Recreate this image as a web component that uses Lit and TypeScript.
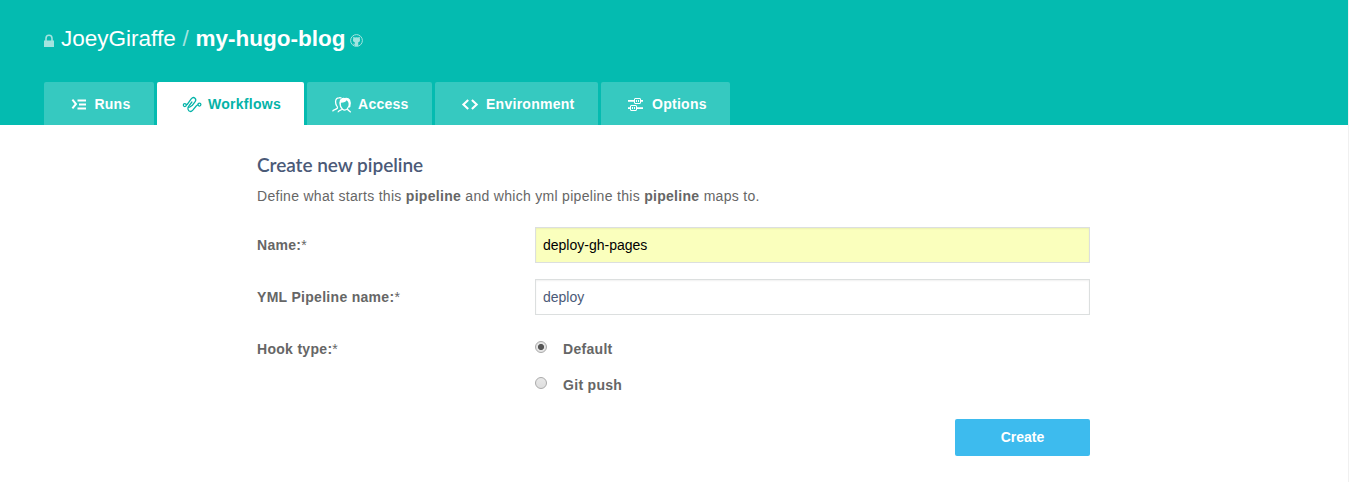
import { LitElement, html, css, svg } from "lit";
import { customElement } from "lit/decorators.js";

const icons: Record<string, unknown> = {
  runs: svg`<path d="M3.4 5.6 L7 10 L3.4 14.4" stroke-width="2"/><path d="M8.5 6.5 H17 M10 10.5 H17 M8.5 14.5 H17" stroke-width="1.9"/>`,
  workflows: svg`<g stroke-width="1.25" stroke-linecap="round"><circle cx="2.8" cy="11" r="1.5"/><circle cx="17.4" cy="10.6" r="1.5"/><path d="M4.3 10.8 Q5.4 10.6 6 9.4 L9.2 4.8 Q11.2 2.6 13 4.2 Q14.6 5.8 13 7.8 L10.4 11.2 L7.4 13.2 M6.2 13.2 Q5.2 15.2 6.8 16.8 Q8.9 18.4 10.8 16.2 L14.2 12 Q14.9 11 15.9 10.8"/><path d="M9.9 8 L7 11.8 L6.2 13.2"/></g>`,
  access: svg`<g stroke-width="1.3"><path d="M.6 17.3 C1 15.3 4.6 15.4 5.4 14.2 Q5.8 13.2 4.4 11.4 Q3.5 9.6 3.6 7.3 Q4 3.8 7 3.9 Q8.2 3.2 9.5 4.2"/><path d="M6 18.3 C6.2 16.2 9.5 16.3 10.3 15 Q7.8 12.5 8.1 8.2 M15.2 14.9 Q15.8 16.1 18.8 18.2 M15.2 14.9 Q17.6 12.5 17.6 8.5 M10.3 15 Q12.8 17.2 15.2 14.9"/></g><path class="solid" d="M7.9 10.2 Q6.8 5.9 9.3 4.8 Q10.2 3.5 12.7 3.9 Q16.4 2.9 18.1 5.8 Q19.6 8.8 18.3 13 L17 13.8 Q17.5 8.4 14.6 6.2 Q13.7 8.5 9 8.8 Z"/>`,
  environment: svg`<path d="M8.2 6 L3.4 10.5 L8.2 15 M11.9 6 L16.7 10.5 L11.9 15" stroke-width="2.1"/>`,
  options: svg`<g stroke-width="1"><path d="M2 6.9 H8 M15 6.9 H17 M2 14.1 H4 M11 14.1 H17" stroke-width="1.6"/><rect x="8.5" y="4.5" width="6" height="5" rx=".5"/><rect x="4.5" y="11.5" width="6" height="5" rx=".5"/><path d="M10.5 6 V8 M12.5 6 V8 M6.5 13 V15 M8.5 13 V15"/></g>`,
};

const tabs = [
  ["runs", "Runs"],
  ["workflows", "Workflows"],
  ["access", "Access"],
  ["environment", "Environment"],
  ["options", "Options"],
];

@customElement("app-root")
export class AppRoot extends LitElement {
  static styles = css`
    :host {
      display: block;
      box-sizing: border-box;
      height: 482px;
      border-right: 1px solid #f0f0f0;
      background: #fff;
      color: #666;
      font: 14px/20px "Liberation Sans", Arial, sans-serif;
      letter-spacing: 0.3px;
      overflow: hidden;
    }
    .header {
      box-sizing: border-box;
      height: 125px;
      padding: 25px 44px 0;
      background: #04bbb0;
      color: #fff;
      display: flex;
      flex-direction: column;
      justify-content: space-between;
    }
    .title {
      display: flex;
      height: 28px;
      font-size: 22.5px;
      line-height: 28px;
      letter-spacing: 0;
      white-space: pre;
    }
    .lock { width: 11px; height: 14px; margin: 9px 6px 0 0; fill: #a3e4df; }
    .slash { color: #a3e4df; margin: 0 6.8px; }
    .github { width: 13px; height: 13px; margin: 9px 0 0 5px; }
    .tabs {
      display: grid;
      grid-template-columns: 110px 147px 125px 163px 129px;
      grid-template-rows: 43px;
      gap: 3px;
      height: 43px;
    }
    .tab {
      display: flex;
      align-items: center;
      gap: 6px;
      padding: 1px 0 0 25px;
      box-sizing: border-box;
      background: #36c9c0;
      border-radius: 2px 2px 0 0;
      font-weight: bold;
      letter-spacing: 0.27px;
      white-space: nowrap;
    }
    .tab.runs { gap: 5.4px; }
    .tab.workflows { background: #fff; color: #04b3a8; }
    .icon { width: 20px; height: 20px; flex: none; fill: none; stroke: currentColor; }
    .solid { fill: currentColor; stroke: none; }
    .content { width: 833px; margin-left: 257px; padding-top: 28px; }
    h1 {
      margin: 0;
      font: 600 19px/24px Lato, sans-serif;
      letter-spacing: -0.04px;
      color: #4b5a78;
    }
    .intro { margin: 9px 0 21px; white-space: nowrap; }
    .row { display: grid; grid-template-columns: 278px 555px; align-items: center; margin-bottom: 16px; }
    .label { font-weight: bold; }
    .star { font-weight: normal; }
    input {
      box-sizing: border-box;
      width: 555px;
      height: 36px;
      padding: 0 7px;
      border: 1px solid #dcdfdf;
      border-radius: 0;
      box-shadow: inset 0 1px 2px rgba(0, 0, 0, 0.06);
      background: #fff;
      color: #4b5a78;
      font: 14px "Liberation Sans", Arial, sans-serif;
      letter-spacing: 0;
      outline: none;
    }
    .filled { background: #faffbd; color: #000; }
    .choices { grid-template-columns: 278px auto; align-items: start; padding-top: 8px; margin-bottom: 24px; }
    .hooks { display: grid; gap: 16px; }
    .choice { display: flex; font-weight: bold; }
    .radio {
      box-sizing: border-box;
      width: 12px;
      height: 12px;
      margin: 2px 16px 0 0;
      border: 1px solid #aaa;
      border-radius: 50%;
      background: linear-gradient(#e8e8e8, #dedede);
    }
    .checked { background: radial-gradient(circle, #555 0 2.7px, #e4e4e4 3.4px); }
    .actions { display: flex; justify-content: flex-end; }
    button {
      width: 135px;
      height: 37px;
      border: 0;
      padding: 0 0 2px;
      border-radius: 2px;
      background: #3dbbee;
      color: #fff;
      font: bold 14px "Liberation Sans", Arial, sans-serif;
      letter-spacing: 0;
    }
  `;

  render() {
    return html`
      <header class="header">
        <div class="title">
          <svg class="lock" viewBox="0 0 11 14"><path d="M0 6.5 H1.2 V4.5 A3.8 4 0 0 1 8.8 4.5 V6.5 H10 V13 H0 Z M2.8 6.5 H7.2 V4.5 A2.2 2.4 0 0 0 2.8 4.5 Z" /></svg>
          <span>JoeyGiraffe</span><span class="slash">/</span><b>my-hugo-blog</b>
          <svg class="github" viewBox="0 0 13 13"><circle cx="6.5" cy="6.5" r="5.9" fill="none" stroke="#a3e4df" /><path fill="#a3e4df" d="M3.2 2.7 L5 3.5 Q6.5 3.2 8 3.5 L9.8 2.7 V4.6 Q10.8 7.8 8 8.5 Q8.4 9 8.3 12 H4.7 V10.8 Q3.2 10.8 2.7 9.5 Q3.8 9.5 4.6 10 L5 8.5 Q2.2 7.8 3.2 4.6 Z" /></svg>
        </div>
        <nav class="tabs">
          ${tabs.map(([id, name]) => html`<div class="tab ${id}"><svg class="icon" viewBox="0 0 20 20">${icons[id]}</svg><span>${name}</span></div>`)}
        </nav>
      </header>
      <main class="content">
        <h1>Create new pipeline</h1>
        <div class="intro">Define what starts this <b>pipeline</b> and which yml pipeline this <b>pipeline</b> maps to.</div>
        <div class="row"><span class="label">Name:<span class="star">*</span></span><input class="filled" value="deploy-gh-pages" /></div>
        <div class="row"><span class="label">YML Pipeline name:<span class="star">*</span></span><input value="deploy" /></div>
        <div class="row choices">
          <span class="label">Hook type:<span class="star">*</span></span>
          <div class="hooks">
            <label class="choice"><span class="radio checked"></span>Default</label>
            <label class="choice"><span class="radio"></span>Git push</label>
          </div>
        </div>
        <div class="actions"><button>Create</button></div>
      </main>
    `;
  }
}
